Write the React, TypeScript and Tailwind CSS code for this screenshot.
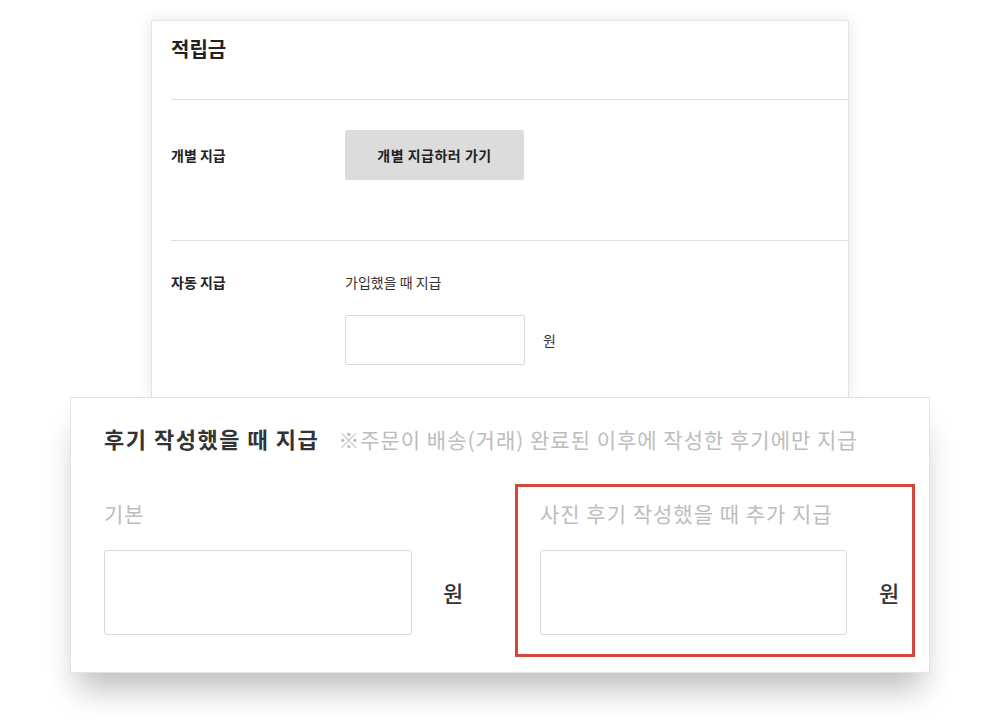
export default function App() {
  return (
    <div
      className="min-h-[727px] w-[1000px] bg-white"
      style={{ fontFamily: '"Noto Sans CJK KR", "Noto Sans", sans-serif' }}
    >
      <div className="pt-[20px]">
        {/* Back card: 적립금 settings */}
        <div className="ml-[151px] w-[698px] border border-b-0 border-[#e4e4e4] bg-white pl-[19px] shadow-[0_0_14px_rgba(0,0,0,0.10)]">
          <div className="flex h-[79px] items-start border-b border-[#dedede] pt-[14px]">
            <h1 className="text-[20px] font-bold leading-[28px] text-[#222]">적립금</h1>
          </div>

          <div className="flex h-[141px] border-b border-[#dedede] pt-[30px]">
            <div className="flex h-[50px] w-[174px] items-center text-[14px] font-bold text-[#222]">
              개별 지급
            </div>
            <button className="h-[50px] w-[179px] rounded-[2px] bg-[#dcdcdc] text-[14px] font-bold tracking-[0.5px] text-[#222]">
              개별 지급하러 가기
            </button>
          </div>

          <div className="flex h-[156px] pt-[31px]">
            <div className="w-[174px] text-[14px] font-bold leading-[20px] text-[#222]">자동 지급</div>
            <div className="flex flex-col">
              <div className="text-[14px] leading-[20px] text-[#333]">가입했을 때 지급</div>
              <div className="mt-[23px] flex items-center">
                <div className="h-[50px] w-[180px] rounded-[2px] border border-[#dadada] bg-white" />
                <span className="ml-[18px] text-[14px] text-[#333]">원</span>
              </div>
            </div>
          </div>
        </div>

        {/* Front card: zoomed review section */}
        <div className="relative ml-[70px] h-[276px] w-[860px] border border-[#e2e2e2] bg-white pl-[33px] pt-[25px] shadow-[0_24px_30px_-8px_rgba(0,0,0,0.26)]">
          <div className="flex items-baseline">
            <h2 className="text-[22px] font-bold leading-[30px] tracking-[1.5px] text-[#333]">후기 작성했을 때 지급</h2>
            <span className="ml-[19px] text-[21px] leading-[30px] tracking-[1px] text-[#bdbdbd]">
              ※주문이 배송(거래) 완료된 이후에 작성한 후기에만 지급
            </span>
          </div>

          <div className="mt-[30px] flex items-start">
            <div className="flex w-[411px] flex-none flex-col pt-[15px]">
              <div className="text-[21px] leading-[28px] tracking-[1px] text-[#bdbdbd]">기본</div>
              <div className="mt-[23px] flex items-center">
                <div className="h-[85px] w-[308px] rounded-[3px] border-[1.5px] border-[#d9d9d9] bg-white" />
                <span className="ml-[31px] text-[22px] font-medium text-[#333]">원</span>
              </div>
            </div>

            <div className="flex w-[400px] flex-col border-[3px] border-[#d2463c] pb-[19px] pl-[22px] pt-[12px]">
              <div className="text-[21px] leading-[28px] tracking-[1px] text-[#bdbdbd]">사진 후기 작성했을 때 추가 지급</div>
              <div className="mt-[23px] flex items-center">
                <div className="h-[85px] w-[307px] rounded-[3px] border-[1.5px] border-[#d9d9d9] bg-white" />
                <span className="ml-[32px] text-[22px] font-medium text-[#333]">원</span>
              </div>
            </div>
          </div>
        </div>
      </div>
    </div>
  );
}
